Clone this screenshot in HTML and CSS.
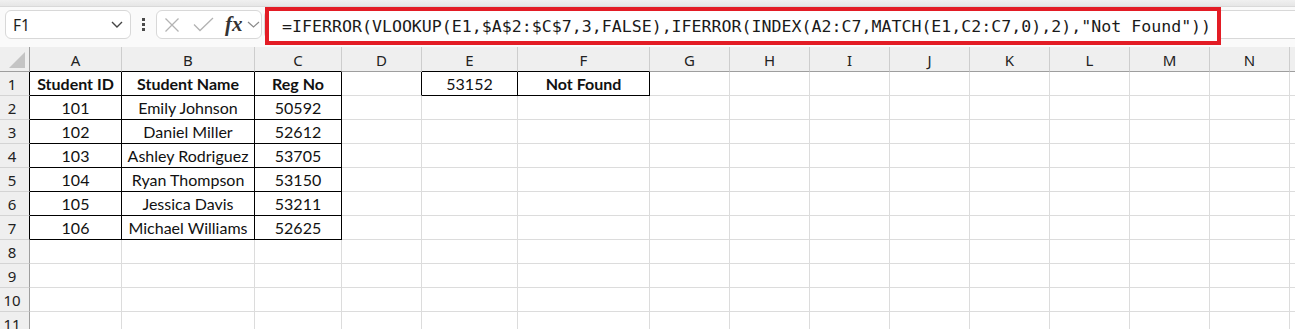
FILE: index.html
```html
<!DOCTYPE html>
<html lang="en">
<head>
    <meta charset="UTF-8">
    <meta name="viewport" content="width=device-width, initial-scale=1.0">
    <title>Lookup sheet</title>
    <link rel="stylesheet" href="styles.css">
</head>
<body>
    <div class="ribbon-edge"></div>

    <div class="formula-bar">
        <div class="name-box">
            <span>F1</span>
            <svg width="12" height="7" viewBox="0 0 12 7"><path d="M1 1L6 6L11 1" fill="none" stroke="#444" stroke-width="1.4"/></svg>
        </div>

        <div class="grip"><span></span><span></span><span></span></div>

        <div class="fx-box">
            <svg width="16" height="16" viewBox="0 0 16 16"><path d="M1.5 1.5L14.5 14.5M14.5 1.5L1.5 14.5" fill="none" stroke="#b3b3b3" stroke-width="1.3"/></svg>
            <svg class="check" width="21" height="15" viewBox="0 0 21 15"><path d="M1 7.5L7 13.5L20 1" fill="none" stroke="#b3b3b3" stroke-width="1.3"/></svg>
            <span class="fx">fx</span>
            <svg width="13" height="7" viewBox="0 0 13 7"><path d="M1 1L6.5 6L12 1" fill="none" stroke="#8a8a8a" stroke-width="1.2"/></svg>
        </div>

        <div class="formula-box">
            <div class="formula">=IFERROR(VLOOKUP(E1,$A$2:$C$7,3,FALSE),IFERROR(INDEX(A2:C7,MATCH(E1,C2:C7,0),2),"Not Found"))</div>
        </div>
    </div>

    <div class="sheet" id="sheet"></div>

    <script>
        // last column is only a sliver at the right edge, so it gets no label
        const columns = ['A', 'B', 'C', 'D', 'E', 'F', 'G', 'H', 'I', 'J', 'K', 'L', 'M', 'N', ''];

        // one array per row, values from column A onwards
        const rows = [
            ['Student ID', 'Student Name', 'Reg No', '', '53152', 'Not Found'],
            ['101', 'Emily Johnson', '50592'],
            ['102', 'Daniel Miller', '52612'],
            ['103', 'Ashley Rodriguez', '53705'],
            ['104', 'Ryan Thompson', '53150'],
            ['105', 'Jessica Davis', '53211'],
            ['106', 'Michael Williams', '52625'],
            [], [], [], []
        ];

        const boldCells = ['A1', 'B1', 'C1', 'F1'];

        // cells that carry a thin black border
        function inTable(r, c) {
            if (r >= 1 && r <= 7 && c >= 0 && c <= 2) return true;
            if (r === 1 && (c === 4 || c === 5)) return true;
            return false;
        }

        const sheet = document.getElementById('sheet');

        function addCell(className, text) {
            const cell = document.createElement('div');
            cell.className = className;
            if (text) cell.textContent = text;
            sheet.appendChild(cell);
            return cell;
        }

        const corner = addCell('cell head corner');
        corner.innerHTML = '<svg width="16" height="16" viewBox="0 0 16 16"><path d="M16 0V16H0Z" fill="#c4c4c4"/></svg>';

        columns.forEach((name, c) => {
            let cls = 'cell head';
            if (inTable(1, c)) cls += ' edge-bottom';
            addCell(cls, name);
        });

        rows.forEach((values, i) => {
            const r = i + 1;
            let cls = 'cell row-head';
            if (inTable(r, 0)) cls += ' edge-right';
            addCell(cls, String(r));

            columns.forEach((name, c) => {
                let cellCls = 'cell';
                if (inTable(r, c) || inTable(r, c + 1)) cellCls += ' edge-right';
                if (inTable(r, c) || inTable(r + 1, c)) cellCls += ' edge-bottom';
                if (boldCells.includes(name + r)) cellCls += ' bold';
                addCell(cellCls, values[c] || '');
            });
        });
    </script>
</body>
</html>
```

FILE: styles.css
```css
* {
    margin: 0;
    padding: 0;
    box-sizing: border-box;
}

body {
    width: 1295px;
    height: 329px;
    overflow: hidden;
    background: #fff;
    font-family: "Noto Sans", "Open Sans", sans-serif;
    color: #222;
}

.ribbon-edge {
    height: 7px;
    background: linear-gradient(#f0f0f0, #e6e6e6);
    border-bottom: 1px solid #d9d9d9;
}

/* formula bar */

.formula-bar {
    height: 40px;
    display: flex;
    align-items: flex-start;
    padding: 3px 0 0 5px;
    background: #fafafa;
}

.name-box,
.fx-box,
.formula-box {
    height: 29px;
    background: #fff;
    border: 1px solid #d8d8d8;
    border-radius: 6px;
    display: flex;
    align-items: center;
}

.name-box {
    width: 126px;
    justify-content: space-between;
    padding: 0 7px 0 7px;
    font-size: 15.5px;
    color: #1e1e1e;
}

.grip {
    display: flex;
    flex-direction: column;
    gap: 2px;
    margin: 0 11px 0 11px;
    padding-top: 8px;
}

.grip span {
    width: 3px;
    height: 3px;
    background: #4a4a4a;
}

.fx-box {
    width: 106px;
    padding-left: 7px;
}

.fx-box .check {
    margin-left: 13px;
}

.fx {
    font-family: "Liberation Serif", serif;
    font-style: italic;
    font-weight: 700;
    font-size: 21px;
    color: #333;
    margin: 0 4px 0 11px;
    line-height: 1;
}

.formula-box {
    flex: 1;
    align-items: flex-start;
    margin: 0 -20px 0 2px;
}

.formula {
    height: 38px;
    margin: -4px 0 0 0;
    border: 4px solid #e31c25;
    padding: 0 6px 0 13px;
    display: flex;
    align-items: center;
    font-family: "DejaVu Sans Mono", monospace;
    font-size: 16.6px;
    color: #1a1a1a;
    white-space: nowrap;
    background: #fff;
}

/* worksheet */

.sheet {
    display: grid;
    grid-template-columns: 30px 92px 133px 87px 80px 96px 132px repeat(9, 80px);
    grid-template-rows: 25px;
    grid-auto-rows: 24px;
    font-family: Lato, sans-serif;
    font-size: 16px;
    color: #111;
}

.cell {
    border-right: 1px solid #dcdcdc;
    border-bottom: 1px solid #dcdcdc;
    display: flex;
    align-items: center;
    justify-content: center;
    white-space: nowrap;
    overflow: hidden;
}

.head {
    background: #efefef;
    border-right-color: #cdcdcd;
    border-bottom-color: #9e9e9e;
    font-family: "Noto Sans", sans-serif;
    font-size: 15px;
    color: #222;
    padding-top: 1px;
}

.corner {
    justify-content: flex-end;
    align-items: flex-end;
    padding: 0 4px 3px 0;
    border-right-color: #9e9e9e;
}

.row-head {
    background: #efefef;
    border-right-color: #9e9e9e;
    border-bottom-color: #d4d4d4;
    font-family: "Noto Sans", sans-serif;
    font-size: 15px;
    color: #222;
    padding-right: 5px;
}

.edge-right {
    border-right-color: #000;
}

.edge-bottom {
    border-bottom-color: #000;
}

.bold {
    font-weight: 700;
}
```
